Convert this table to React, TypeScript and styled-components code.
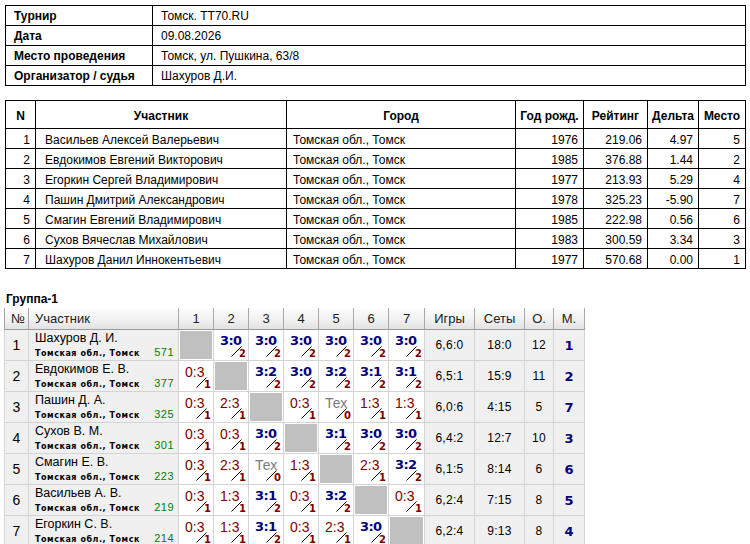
import React from "react";
import styled, { createGlobalStyle } from "styled-components";

const Global = createGlobalStyle`
  html, body { margin: 0; padding: 0; background: #fff; }
  body { font-family: "Liberation Sans", Arial, sans-serif; font-size: 12px; color: #000; }
`;

const Page = styled.div`
  padding: 5px 5px 0 5px;
  display: flex;
  flex-direction: column;
  align-items: flex-start;
`;

const InfoTable = styled.table`
  border-collapse: collapse;
  table-layout: fixed;
  width: 741px;
  font-size: 12px;
`;

const InfoCell = styled.td<{ $label?: boolean }>`
  border: 1px solid #000;
  height: 19px;
  padding: 0 0 0 8px;
  font-weight: ${(p) => (p.$label ? "bold" : "normal")};
  white-space: nowrap;
`;

const MainTable = styled.table`
  margin-top: 14px;
  border-collapse: collapse;
  table-layout: fixed;
  width: 741px;
  font-size: 12px;
`;

const MainHead = styled.th`
  border: 1px solid #000;
  height: 24px;
  padding: 3px 0 0 0;
  font-weight: bold;
  text-align: center;
  white-space: nowrap;
`;

const MainCell = styled.td<{ $align?: "left" | "right"; $pl?: number }>`
  border: 1px solid #000;
  height: 16px;
  padding: 3px 5px 0 ${(p) => (p.$pl ?? 5)}px;
  text-align: ${(p) => p.$align ?? "left"};
  white-space: nowrap;
`;

const GroupTitle = styled.div`
  margin: 23px 0 0 1px;
  font-weight: bold;
  font-size: 12px;
  line-height: 14px;
`;

const GroupTable = styled.table`
  margin: 2px 0 0 -1px;
  border-collapse: collapse;
  table-layout: fixed;
  width: 581px;
  border: 1px solid #a6a6a6;
  border-top: none;
  font-family: "Liberation Sans", Arial, sans-serif;
`;

const GHead = styled.th<{ $left?: boolean }>`
  height: 21px;
  padding: 0 0 0 ${(p) => (p.$left ? 6 : 0)}px;
  background: linear-gradient(#fdfdfd, #f1f1f1 55%, #e2e2e2);
  border-right: 1px solid #a8a8a8;
  border-bottom: 1px solid #9a9a9a;
  font-weight: normal;
  font-size: 13px;
  color: #222;
  text-align: ${(p) => (p.$left ? "left" : "center")};
  white-space: nowrap;
`;

const GCell = styled.td<{ $bg?: string }>`
  height: 29px;
  padding: 0;
  border: 1px solid #d4d4d4;
  background: ${(p) => p.$bg ?? "#fff"};
  vertical-align: middle;
  text-align: center;
  font-size: 12px;
  white-space: nowrap;
`;

const NumCell = styled(GCell)`
  font-size: 14px;
`;

const Player = styled.div`
  display: flex;
  flex-direction: column;
  padding: 1px 4px 0 6px;
  text-align: left;
`;

const PlayerName = styled.div`
  font-size: 12.5px;
  line-height: 15px;
`;

const PlayerSub = styled.div`
  display: flex;
  justify-content: space-between;
  align-items: baseline;
  line-height: 12px;
`;

const City = styled.span`
  font-family: "DejaVu Sans", Verdana, sans-serif;
  font-size: 8px;
  font-weight: bold;
  letter-spacing: 0.55px;
`;

const Rating = styled.span`
  font-size: 11px;
  color: #008000;
  letter-spacing: 0.5px;
`;

const Diag = styled.td`
  height: 29px;
  padding: 0;
  border: 1px solid #d4d4d4;
  background: #c0c0c0;
  box-shadow: inset 0 0 0 1px #fff;
`;

const ScoreBox = styled.div`
  position: relative;
  height: 29px;
`;

const ScoreText = styled.span<{ $kind: "win" | "loss" | "tech" }>`
  position: absolute;
  left: 6px;
  top: 2px;
  font-family: ${(p) =>
    p.$kind === "win" ? '"DejaVu Sans", Verdana, sans-serif' : '"Liberation Sans", Arial, sans-serif'};
  font-weight: ${(p) => (p.$kind === "win" ? "bold" : "normal")};
  font-size: ${(p) => (p.$kind === "win" ? 13 : 14)}px;
  line-height: ${(p) => (p.$kind === "win" ? 15 : 16)}px;
  letter-spacing: ${(p) => (p.$kind === "win" ? "-0.6px" : "0")};
  color: ${(p) => (p.$kind === "win" ? "#000080" : p.$kind === "loss" ? "#800000" : "#7a7a7a")};
`;

const Slash = styled.svg`
  position: absolute;
  left: 17px;
  top: 15px;
`;

const Points = styled.span`
  position: absolute;
  right: 2px;
  bottom: 1px;
  font-family: "DejaVu Sans", Verdana, sans-serif;
  font-weight: bold;
  font-size: 10px;
  line-height: 10px;
  color: #800000;
`;

const StatCell = styled(GCell)`
  background: #f0f0f0;
  font-size: 12px;
  letter-spacing: 0.3px;
`;

const PlaceCell = styled(GCell)`
  background: #f0f0f0;
  font-family: "DejaVu Sans", Verdana, sans-serif;
  font-weight: bold;
  font-size: 13px;
  color: #000080;
`;

const info: [string, string][] = [
  ["Турнир", "Томск. TT70.RU"],
  ["Дата", "09.08.2026"],
  ["Место проведения", "Томск, ул. Пушкина, 63/8"],
  ["Организатор / судья", "Шахуров Д.И."],
];

const players = [
  ["Васильев Алексей Валерьевич", "1976", "219.06", "4.97", "5"],
  ["Евдокимов Евгений Викторович", "1985", "376.88", "1.44", "2"],
  ["Егоркин Сергей Владимирович", "1977", "213.93", "5.29", "4"],
  ["Пашин Дмитрий Александрович", "1978", "325.23", "-5.90", "7"],
  ["Смагин Евгений Владимирович", "1985", "222.98", "0.56", "6"],
  ["Сухов Вячеслав Михайлович", "1983", "300.59", "3.34", "3"],
  ["Шахуров Данил Иннокентьевич", "1977", "570.68", "0.00", "1"],
];

type G = {
  name: string;
  rating: string;
  res: string[];
  games: string;
  sets: string;
  pts: string;
  place: string;
};

const group: G[] = [
  { name: "Шахуров Д. И.", rating: "571", res: ["x", "3:0", "3:0", "3:0", "3:0", "3:0", "3:0"], games: "6,6:0", sets: "18:0", pts: "12", place: "1" },
  { name: "Евдокимов Е. В.", rating: "377", res: ["0:3", "x", "3:2", "3:0", "3:2", "3:1", "3:1"], games: "6,5:1", sets: "15:9", pts: "11", place: "2" },
  { name: "Пашин Д. А.", rating: "325", res: ["0:3", "2:3", "x", "0:3", "Тех", "1:3", "1:3"], games: "6,0:6", sets: "4:15", pts: "5", place: "7" },
  { name: "Сухов В. М.", rating: "301", res: ["0:3", "0:3", "3:0", "x", "3:1", "3:0", "3:0"], games: "6,4:2", sets: "12:7", pts: "10", place: "3" },
  { name: "Смагин Е. В.", rating: "223", res: ["0:3", "2:3", "Тех", "1:3", "x", "2:3", "3:2"], games: "6,1:5", sets: "8:14", pts: "6", place: "6" },
  { name: "Васильев А. В.", rating: "219", res: ["0:3", "1:3", "3:1", "0:3", "3:2", "x", "0:3"], games: "6,2:4", sets: "7:15", pts: "8", place: "5" },
  { name: "Егоркин С. В.", rating: "214", res: ["0:3", "1:3", "3:1", "0:3", "2:3", "3:0", "x"], games: "6,2:4", sets: "9:13", pts: "8", place: "4" },
];

function Score({ r }: { r: string }) {
  const kind: "win" | "loss" | "tech" =
    r === "Тех" ? "tech" : parseInt(r[0], 10) > parseInt(r[2], 10) ? "win" : "loss";
  const pts = kind === "win" ? "2" : kind === "loss" ? "1" : "0";
  return (
    <ScoreBox>
      <ScoreText $kind={kind}>{r}</ScoreText>
      <Slash width="11" height="11" viewBox="0 0 11 11">
        <line x1="0.5" y1="10.5" x2="10.5" y2="0.5" stroke="#000" strokeWidth="1" />
      </Slash>
      <Points>{pts}</Points>
    </ScoreBox>
  );
}

export default function App() {
  return (
    <>
      <Global />
      <Page>
        <InfoTable>
          <colgroup>
            <col style={{ width: 147 }} />
            <col />
          </colgroup>
          <tbody>
            {info.map(([k, v]) => (
              <tr key={k}>
                <InfoCell $label>{k}</InfoCell>
                <InfoCell>{v}</InfoCell>
              </tr>
            ))}
          </tbody>
        </InfoTable>

        <MainTable>
          <colgroup>
            <col style={{ width: 30 }} />
            <col style={{ width: 251 }} />
            <col style={{ width: 229 }} />
            <col style={{ width: 68 }} />
            <col style={{ width: 64 }} />
            <col style={{ width: 51 }} />
            <col />
          </colgroup>
          <thead>
            <tr>
              <MainHead>N</MainHead>
              <MainHead>Участник</MainHead>
              <MainHead>Город</MainHead>
              <MainHead>Год рожд.</MainHead>
              <MainHead>Рейтинг</MainHead>
              <MainHead>Дельта</MainHead>
              <MainHead>Место</MainHead>
            </tr>
          </thead>
          <tbody>
            {players.map((p, i) => (
              <tr key={p[0]}>
                <MainCell $align="right" $pl={0}>{i + 1}</MainCell>
                <MainCell $pl={9}>{p[0]}</MainCell>
                <MainCell $pl={6}>Томская обл., Томск</MainCell>
                <MainCell $align="right">{p[1]}</MainCell>
                <MainCell $align="right">{p[2]}</MainCell>
                <MainCell $align="right">{p[3]}</MainCell>
                <MainCell $align="right">{p[4]}</MainCell>
              </tr>
            ))}
          </tbody>
        </MainTable>

        <GroupTitle>Группа-1</GroupTitle>
        <GroupTable>
          <colgroup>
            <col style={{ width: 24 }} />
            <col style={{ width: 150 }} />
            {[0, 1, 2, 3, 4, 5, 6].map((i) => (
              <col key={i} style={{ width: i === 6 ? 36 : 35 }} />
            ))}
            <col style={{ width: 50 }} />
            <col style={{ width: 50 }} />
            <col style={{ width: 29 }} />
            <col />
          </colgroup>
          <thead>
            <tr>
              <GHead $left>№</GHead>
              <GHead $left>Участник</GHead>
              {[1, 2, 3, 4, 5, 6, 7].map((n) => (
                <GHead key={n}>{n}</GHead>
              ))}
              <GHead>Игры</GHead>
              <GHead>Сеты</GHead>
              <GHead>О.</GHead>
              <GHead>М.</GHead>
            </tr>
          </thead>
          <tbody>
            {group.map((g, i) => (
              <tr key={g.name}>
                <NumCell $bg="#f0f0f0">{i + 1}</NumCell>
                <GCell $bg="#f0f0f0">
                  <Player>
                    <PlayerName>{g.name}</PlayerName>
                    <PlayerSub>
                      <City>Томская обл., Томск</City>
                      <Rating>{g.rating}</Rating>
                    </PlayerSub>
                  </Player>
                </GCell>
                {g.res.map((r, j) =>
                  r === "x" ? (
                    <Diag key={j} />
                  ) : (
                    <GCell key={j}>
                      <Score r={r} />
                    </GCell>
                  )
                )}
                <StatCell>{g.games}</StatCell>
                <StatCell>{g.sets}</StatCell>
                <StatCell>{g.pts}</StatCell>
                <PlaceCell>{g.place}</PlaceCell>
              </tr>
            ))}
          </tbody>
        </GroupTable>
      </Page>
    </>
  );
}
